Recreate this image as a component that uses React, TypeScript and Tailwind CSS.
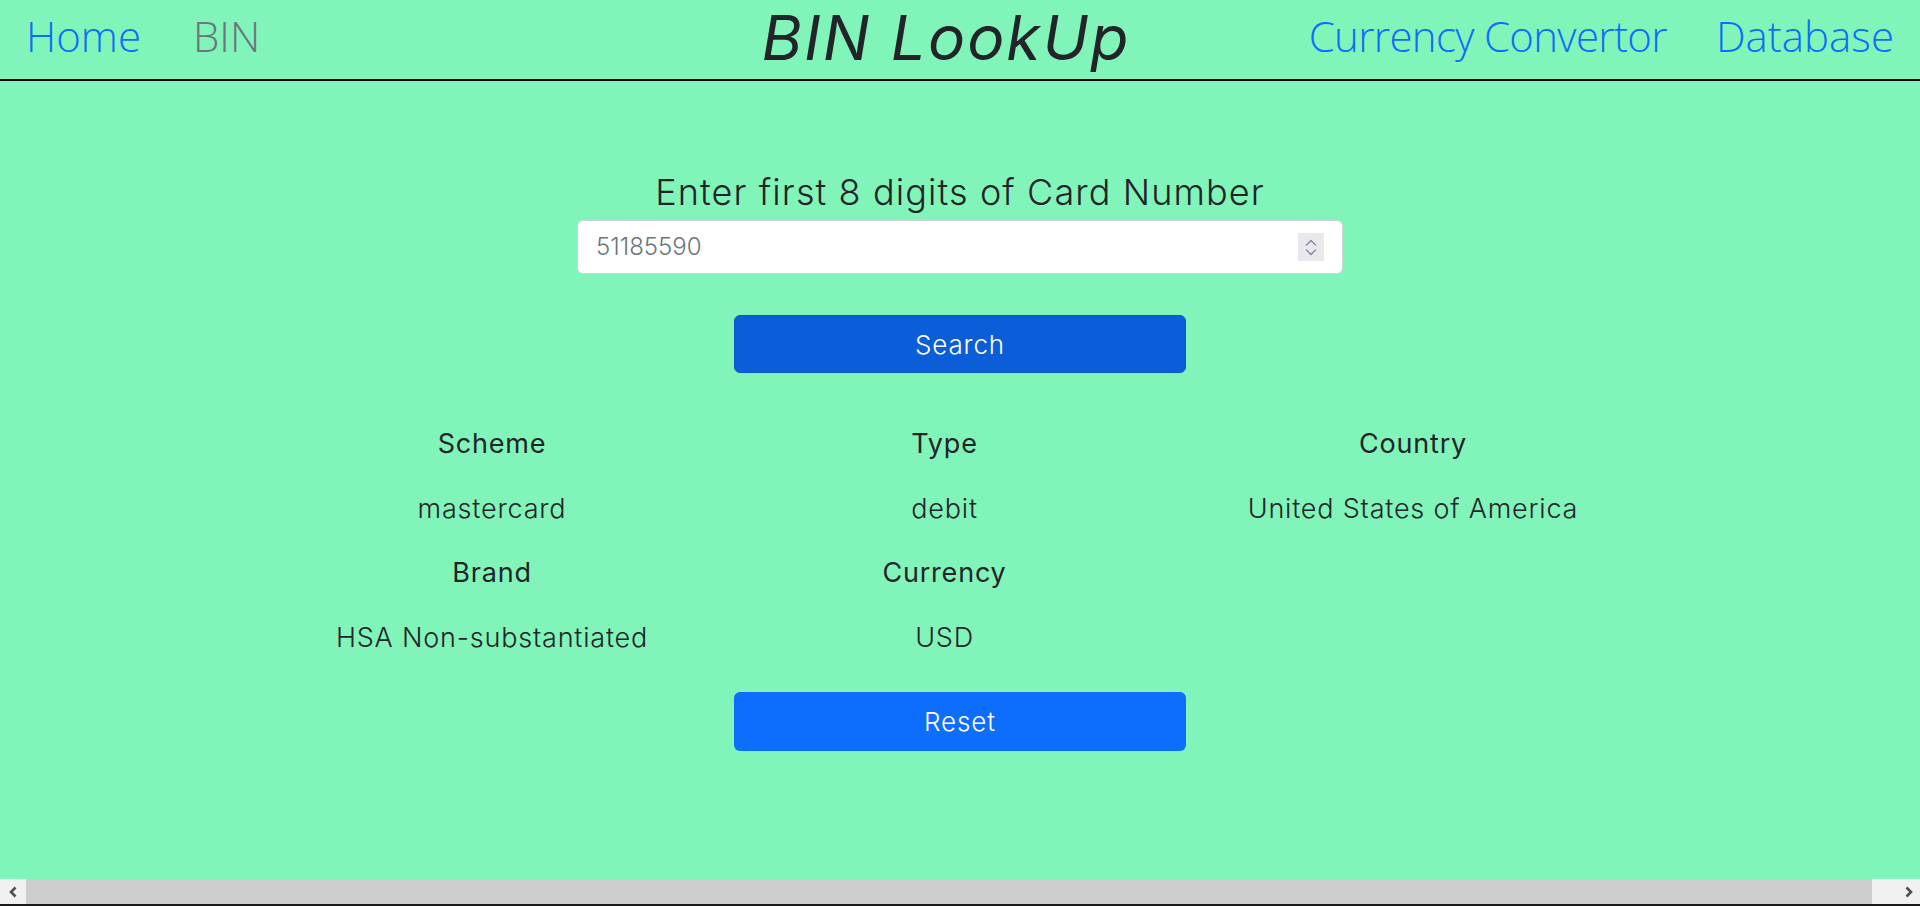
import React from "react";

function Spinner() {
  return (
    <div className="w-[26px] h-[28px] bg-[#e9e9ed] flex flex-col items-center justify-center gap-[3px]">
      <svg width="12" height="7" viewBox="0 0 12 7" fill="none">
        <path d="M1.5 6 L6 1.5 L10.5 6" stroke="#8f8f9d" strokeWidth="1.6" strokeLinecap="round" strokeLinejoin="round" />
      </svg>
      <svg width="12" height="7" viewBox="0 0 12 7" fill="none">
        <path d="M1.5 1 L6 5.5 L10.5 1" stroke="#8f8f9d" strokeWidth="1.6" strokeLinecap="round" strokeLinejoin="round" />
      </svg>
    </div>
  );
}

function Cell({ label, value }: { label: string; value: string }) {
  return (
    <>
      <div className="h-[64.5px] flex items-center justify-center whitespace-nowrap text-[27px] tracking-[0.8px] font-normal text-[#212529]">
        {label}
      </div>
      <div className="h-[64.5px] flex items-center justify-center whitespace-nowrap text-[27px] tracking-[0.8px] font-light text-[#212529]">
        {value}
      </div>
    </>
  );
}

export default function App() {
  return (
    <div className="h-screen w-full flex flex-col bg-[#81f4b9] font-['Inter',sans-serif] text-[#212529]">
      <header className="h-[81px] shrink-0 border-b-2 border-black grid grid-cols-[1fr_auto_1fr] items-start px-[26px]">
        <nav className="mt-[11px] flex items-center gap-[52px] font-['Open_Sans',sans-serif] font-light text-[42px] leading-[1.2]">
          <a className="text-[#0d6efd] cursor-pointer">Home</a>
          <a className="text-[#6c757d] cursor-pointer">BIN</a>
        </nav>
        <h1 className="mr-[24px] pr-[4px] italic font-normal text-[62px] tracking-[2px] leading-[76px] text-[#212529]">BIN LookUp</h1>
        <nav className="mt-[11px] flex items-center justify-end gap-[49px] font-['Open_Sans',sans-serif] font-light text-[42px] leading-[1.2]">
          <a className="text-[#0d6efd] tracking-[-0.7px] cursor-pointer">Currency Convertor</a>
          <a className="text-[#0d6efd] cursor-pointer">Database</a>
        </nav>
      </header>

      <main className="flex-1 flex flex-col items-center">
        <p className="mt-[91px] text-[36px] tracking-[1.1px] font-light leading-[41px] text-[#212529]">
          Enter first 8 digits of Card Number
        </p>
        <div className="mt-[7px] w-[766px] h-[54px] bg-white rounded-[6px] border border-[#ced4da] flex items-center justify-between pl-[18px] pr-[18px]">
          <span className="text-[24px] font-light text-[#6c757d]">51185590</span>
          <Spinner />
        </div>
        <button className="mt-[41px] w-[452px] h-[58px] rounded-[6px] bg-[#0b5ed7] border border-[#0a58ca] text-white text-[26px] tracking-[0.9px] font-light">
          Search
        </button>

        <div className="mt-[39px] w-full flex justify-center items-start pr-[8px]">
          <div className="w-[316px] flex flex-col items-center">
            <Cell label="Scheme" value="mastercard" />
            <Cell label="Brand" value="HSA Non-substantiated" />
          </div>
          <div className="ml-[232px] w-[125px] flex flex-col items-center">
            <Cell label="Type" value="debit" />
            <Cell label="Currency" value="USD" />
          </div>
          <div className="ml-[241px] w-[330px] flex flex-col items-center">
            <Cell label="Country" value="United States of America" />
          </div>
        </div>

        <button className="mt-[22px] w-[452px] h-[59px] rounded-[6px] bg-[#0d6efd] text-white text-[26px] tracking-[0.9px] font-light">
          Reset
        </button>
      </main>

      <div className="h-[25px] shrink-0 flex bg-[#f1f1f1]">
        <div className="w-[26px] flex items-center justify-center">
          <svg width="10" height="12" viewBox="0 0 10 12" fill="none">
            <path d="M7.5 1.5 L3 6 L7.5 10.5" stroke="#505050" strokeWidth="2.6" />
          </svg>
        </div>
        <div className="flex-1 bg-[#cdcdcd]" />
        <div className="w-[48px] flex items-center justify-end pr-[6px]">
          <svg width="10" height="12" viewBox="0 0 10 12" fill="none">
            <path d="M2.5 1.5 L7 6 L2.5 10.5" stroke="#505050" strokeWidth="2.6" />
          </svg>
        </div>
      </div>
      <div className="h-[2px] shrink-0 bg-[#1a1a1a]" />
    </div>
  );
}
